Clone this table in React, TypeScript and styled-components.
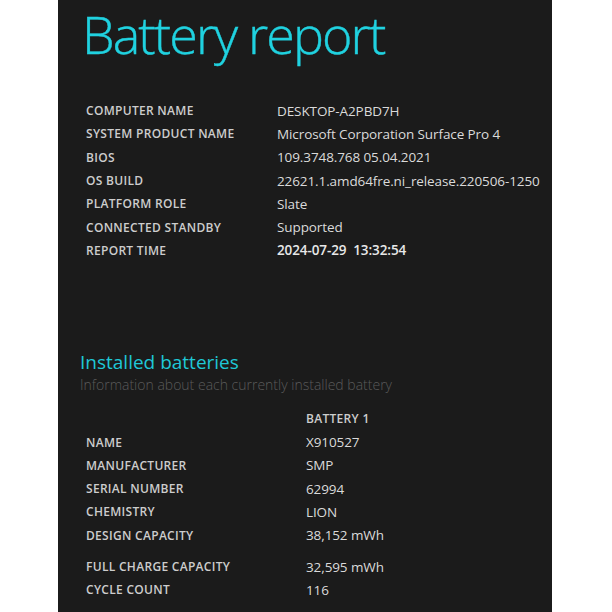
import React from "react";
import styled, { createGlobalStyle } from "styled-components";

const Global = createGlobalStyle`
  html, body { margin: 0; padding: 0; background: #ffffff; }
  body { font-family: "Open Sans", "Noto Sans", sans-serif; }
`;

const Page = styled.div`
  width: 612px;
  height: 612px;
  overflow: hidden;
  background: #ffffff;
  display: flex;
  padding-left: 58px;
  box-sizing: border-box;
`;

const Panel = styled.main`
  width: 494px;
  height: 612px;
  background: #1b1b1b;
  box-sizing: border-box;
  padding: 0 0 0 24px;
  display: flex;
  flex-direction: column;
`;

const Title = styled.h1`
  margin: 0;
  padding: 0 8px 0 0;
  align-self: flex-start;
  font-family: "Open Sans", sans-serif;
  font-weight: 300;
  font-size: 52px;
  line-height: 68px;
  color: #20d2e0;
  letter-spacing: -1.9px;
  -webkit-text-stroke: 0.4px #20d2e0;
`;

const Table = styled.div<{ $top: number }>`
  display: flex;
  flex-direction: column;
  margin-top: ${(p) => p.$top}px;
  padding-left: 4px;
`;

const Row = styled.div<{ $labelWidth: number; $gap?: boolean }>`
  display: grid;
  grid-template-columns: ${(p) => p.$labelWidth}px 1fr;
  height: 23.3px;
  align-items: center;
  margin-top: ${(p) => (p.$gap ? 8 : 0)}px;
`;

const Label = styled.div`
  font-size: 12px;
  font-weight: 600;
  letter-spacing: 0.3px;
  color: #cdcdcd;
  text-transform: uppercase;
  white-space: nowrap;
`;

const Value = styled.div<{ $strong?: boolean }>`
  font-size: 13.5px;
  font-weight: ${(p) => (p.$strong ? 600 : 400)};
  color: ${(p) => (p.$strong ? "#e8e8e8" : "#dadada")};
  white-space: pre;
  letter-spacing: -0.1px;
`;

const Section = styled.section`
  margin-top: 88px;
  display: flex;
  flex-direction: column;
`;

const SectionTitle = styled.h2`
  margin: 0 0 0 -2px;
  font-size: 19px;
  font-weight: 400;
  line-height: 24px;
  color: #1fc8d6;
`;

const SectionSub = styled.p`
  margin: 0 0 0 -2px;
  font-size: 14px;
  font-weight: 300;
  line-height: 22px;
  color: #5a5a5a;
`;

const ColHead = styled.div`
  font-size: 12px;
  font-weight: 600;
  letter-spacing: 0.3px;
  color: #cdcdcd;
`;

const systemRows: [string, string, boolean?][] = [
  ["Computer name", "DESKTOP-A2PBD7H"],
  ["System product name", "Microsoft Corporation Surface Pro 4"],
  ["BIOS", "109.3748.768 05.04.2021"],
  ["OS build", "22621.1.amd64fre.ni_release.220506-1250"],
  ["Platform role", "Slate"],
  ["Connected standby", "Supported"],
  ["Report time", "2024-07-29  13:32:54", true],
];

const batteryRows: [string, string, boolean?][] = [
  ["Name", "X910527"],
  ["Manufacturer", "SMP"],
  ["Serial number", "62994"],
  ["Chemistry", "LION"],
  ["Design capacity", "38,152 mWh"],
  ["Full charge capacity", "32,595 mWh", true],
  ["Cycle count", "116"],
];

export default function App() {
  return (
    <>
      <Global />
      <Page>
        <Panel>
          <Title>Battery report</Title>
          <Table $top={31}>
            {systemRows.map(([l, v, s]) => (
              <Row key={l} $labelWidth={191}>
                <Label>{l}</Label>
                <Value $strong={s}>{v}</Value>
              </Row>
            ))}
          </Table>
          <Section>
            <SectionTitle>Installed batteries</SectionTitle>
            <SectionSub>Information about each currently installed battery</SectionSub>
            <Table $top={11}>
              <Row $labelWidth={220}>
                <span />
                <ColHead>BATTERY 1</ColHead>
              </Row>
              {batteryRows.map(([l, v, g]) => (
                <Row key={l} $labelWidth={220} $gap={g}>
                  <Label>{l}</Label>
                  <Value>{v}</Value>
                </Row>
              ))}
            </Table>
          </Section>
        </Panel>
      </Page>
    </>
  );
}
